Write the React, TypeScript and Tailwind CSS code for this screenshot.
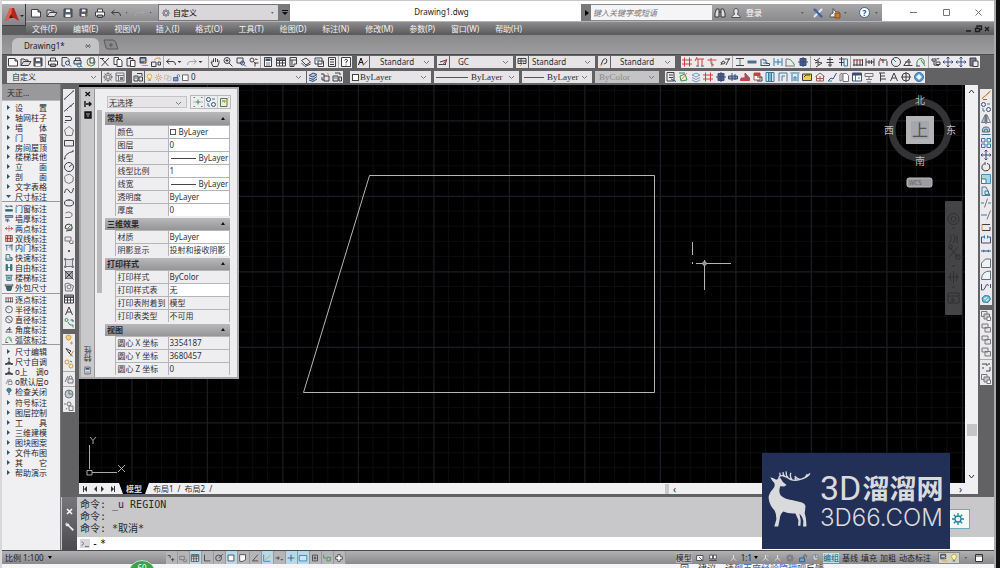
import React, { useState } from 'react';

const K = '#3f3f44';
const S = '#77777c';
const B = '#2f7fa8';
const D = '#3a4f78';
const R = '#c8423c';
const G = '#3f9050';
const O = '#cf9a3a';
const T = '#24606e';
const N = 'none';

// [path, stroke, fill] on a 12 x 12 grid
type Part = [string, string, string?];

const glyphs: Record<string, Part[]> = {
    new: [['M1.5 2.5H8L10.5 5V10H1.5ZM8 2.5V5H10.5', K, '#fff']],
    open: [['M1 9.5V3H4L5 4H8V5.500M1 9.500L3.500 5.500H11L8.500 9.500Z', K, '#dcdcdf']],
    save: [['M2 2H10V10H2Z', K, '#5b6470'], ['M4 2.500H8V5H4ZM3.500 7.500H8.500V10H3.500Z', N, '#fff']],
    saveAs: [['M2 2H9V9H2Z', K, '#5b6470'], ['M4 2.500H7.500V4.500H4ZM3.500 7H7V9H3.500Z', N, '#fff'], ['M6.500 10L10.500 6', O]],
    print: [['M3.500 5V2H8.500V5M1.500 5H10.500V9H1.500ZM3.500 8H8.500V10.500H3.500Z', K, '#fff']],
    preview: [['M2 1.500H7L9 3.500V6M2 1.500V10H5', K], ['M5.500 7a2 2 0 1 0 4 0a2 2 0 1 0 -4 0M9 8.500L11 10.500', D]],
    publish: [['M2 4.500H9V8H2ZM3.500 4.500V2H8V4.500', K, '#dfe3ea'], ['M5 9a2 2 0 1 0 4 0a2 2 0 1 0 -4 0M8.500 10L10.500 11', B]],
    dwf: [['M2 6a4 4 0 1 0 8 0a4 4 0 1 0 -8 0', G], ['M5 2H9V7H5Z', K, '#fff'], ['M3 8L6 10', O]],
    cut: [['M2 2L9.500 10M10 2L2.500 10M1 2.500H5', K]],
    copy: [['M2 1.500H6.500V8.500H2Z', K, '#fff'], ['M5 3.500H8.500L10 5V10.500H5Z', K, '#fff']],
    paste: [['M2 2.500H8V10H2ZM4 1.500H6', K], ['M5.500 4.500H10V10.500H5.500Z', K, '#fff']],
    match: [['M2 1.500H8V7H2Z', K, '#6b7a9a'], ['M4 9.500H10M6 7L9.500 4', O], ['M3 4H7', '#fff']],
    block: [['M1.500 6H6V10.500H1.500ZM8 6H10.500V9H8Z', K], ['M4 4L7 2H10V4', O]],
    undo: [['M4.500 3L1.500 5.500L4.500 8M1.500 5.500H8Q10.500 5.500 10.500 9', K]],
    redo: [['M7.500 3L10.500 5.500L7.500 8M10.500 5.500H4Q1.500 5.500 1.500 9', '#a5a5aa']],
    down: [['M1.500 5H5.500L3.500 7Z', N, K]],
    pan: [['M3 7V4.500M4.500 6V2.500M6.500 6V2M8.500 6V3M2 6L4 10.500H8.500L10 7V4.500', K]],
    zoom: [['M2 4.500a3 3 0 1 0 6 0a3 3 0 1 0 -6 0M7 7L10.500 10.500M5 3V6M3.500 4.500H6.500', K]],
    zoomWin: [['M2 2H8V7H2Z', K], ['M5.500 7a2 2 0 1 0 4 0a2 2 0 1 0 -4 0M9 8.500L11 10.500', D]],
    zoomPrev: [['M2 4a2 2 0 1 0 4 0a2 2 0 1 0 -4 0M5.500 5.500L8 8M10.500 7H7V10.500M7 3L9.500 3.500', K]],
    props: [['M2.500 1.500H9.500V10.500H2.500Z', K, '#fff'], ['M3.500 2.500H8.500V5H3.500Z', N, D], ['M4 7H8M4 9H8', S]],
    grid: [['M1.500 2H10.500V10H1.500Z', K, '#fff'], ['M1.500 4.500H10.500M1.500 7H10.500M4.500 2V10M7.500 2V10', K], ['M2 2.200H10V4H2Z', N, S]],
    palette: [['M3 1.500H9.500V8H7V10.500H3ZM3 4H9.500M5 4V10', K]],
    sheets: [['M1.500 4.500L6 2L10.500 6L6 9ZM1.500 7L5 10.500L10.500 8', K]],
    markup: [['M2 2H9V8H2ZM5 5H10.500V10.500H5Z', K, '#fff'], ['M3 4H7', B]],
    calc: [['M2.500 1.500H9.500V10.500H2.500Z', K], ['M4 3.500H8M4 6H8M4 8.500H8', K]],
    help: [['M1.500 1.500H10.500V10.500H1.500Z', K, '#fff'], ['M4.500 4.500Q6 2 7.500 4Q7.500 5.500 6 6V7.200M6 8.500V9.500', K]],
    textStyle: [['M1.500 9L4 2L6.500 9M2.500 6.500H5.500', '#111'], ['M6 9.500L10.500 4.500', '#8d5a2a']],
    dimStyle: [['M1.500 8.500H9M3 6L9.500 4L8 9', K], ['M5.500 9L10 3', R]],
    tableStyle: [['M2 2.500H10V7.500H2ZM2 5H10M5 2.500V7', K], ['M4 10L8 6', O]],
    leader: [['M3 9L5 4Q8 1 9 4Q9 8 6 8', K], ['M2 10.500L5 7.500', O]],
    hash: [['M3.500 1.500V10.500M8.500 1.500V10.500M1 4H11M1 8H11', R]],
    piR: [['M2 3H10M4 3V10.500M8 3V10.500M1 5L3 1', R], ['M2 10H5M7 10H10', B]],
    flagR: [['M1.500 4H10.500M5 2V7Q5 9 8 9', R], ['M6 6V11', S]],
    axis: [['M2 9Q4 2 6 7M7 9L10.500 2M6 3H11M2 6a2 2 0 1 0 4 0', K]],
    ibeam: [['M2 2.500H10M2 9.500H10', K], ['M6 3V9', G]],
    bar: [['M1.500 4.500H10.500V7.500H1.500Z', N, '#4a6f88']],
    stairs: [['M2 9.500H10.500V7.500H7V4H4V2.500M2 3V10', D], ['M4 7H9', B]],
    span: [['M2 2V10M10 2V10M6 3V9', B], ['M2.500 6H9.500', B]],
    arcG: [['M2 3Q7 2 10.500 9', G], ['M2 3V10M1 10H11', S]],
    column: [['M3 2.500H9V9.500H3ZM1 6H11M6 1V11', D, '#4d5e86']],
    pen1: [['M2 3L4 5L8 2M3 7L6 6L10 7L4 11M6 4V9', K]],
    pen2: [['M3 3.500H9M2.500 6.500H9.500M6 1V11M4 9H8', K]],
    pen3: [['M2 3H7M4.500 1V10M2 6.500H7', K], ['M7 3H10.500V10H7Z', B]],
    dims: [['M2 3V10M5 3V10M8 3V10M10.500 3V10', K], ['M1.500 4H10.500', R], ['M1 9H11', K]],
    dimH: [['M2 2.500V10M10 2.500V10M2 6H10M5 4V8M7.500 4V8', K]],
    dimD: [['M2 5V10M10 5V10M2 4H10M6 3V7', K], ['M3 2L5 4', R]],
    dial: [['M1.500 6a4.500 4.500 0 1 0 9 0a4.500 4.500 0 1 0 -9 0', K], ['M6 6L3 3', B]],
    dialD: [['M1.500 6a4.500 4.500 0 1 0 9 0a4.500 4.500 0 1 0 -9 0', K], ['M9 9L3 3', T]],
    angle: [['M1.500 9.500H10.500M2 9L7 3V9M3 6H9', K]],
    arcDim: [['M2 10Q1 3 6 2.500Q10 3 9 8M6 4L10 10', G], ['M1 10H5', K]],
    nodes: [['M2 3H6V5H2ZM6 6H10V8.500H6Z', K], ['M4 5V9L9 9.500M7 2a1 1 0 1 0 2 0', K]],
    move: [['M6 1V11M1 6H11M4.500 2.500L6 1L7.500 2.500M4.500 9.500L6 11L7.500 9.500M2.500 4.500L1 6L2.500 7.500M9.500 4.500L11 6L9.500 7.500', D]],
    clip: [['M2 2H8V10H2Z', K, '#777a88'], ['M5 5H10V10.500H5Z', K, '#e8e8ee']],
    gear: [['M4 6a2 2 0 1 0 4 0a2 2 0 1 0 -4 0M6 1V3M6 9V11M1 6H3M9 6H11M2.500 2.500L4 4M8 8L9.500 9.500M9.500 2.500L8 4M2.500 9.500L4 8', S], ['M2.500 6a3.500 3.500 0 1 0 7 0a3.500 3.500 0 1 0 -7 0', S]],
    wspace: [['M2 2H10V10H2ZM2 4.500H10M4.500 4.500V10', S], ['M6 6H9V9H6Z', N, S]],
    layers: [['M2 5H6V10H2ZM5 2.500H10V5M7 6H10.500V10H7Z', K], ['M3 7H5', B]],
    bulb: [['M3 4.500a3 3 0 1 1 6 0Q8 6 7.500 8H4.500Q4 6 3 4.500', O, '#fff3b0'], ['M4.500 9.500H7.500', K]],
    bulbT: [['M3 4.500a3 3 0 1 1 6 0Q8 6 6 8Q4 6 3 4.500', T, '#4c8795'], ['M4.500 9.500H7.500', K]],
    sun: [['M4 6a2 2 0 1 0 4 0a2 2 0 1 0 -4 0M6 1V3M6 9V11M1 6H3M9 6H11M2.500 2.500L4 4M8 8L9.500 9.500M9.500 2.500L8 4M2.500 9.500L4 8', O]],
    ghost: [['M2 3H7V8H2ZM6 5H10.500V10H6Z', '#b9b9bd']],
    lock: [['M2 6H8V10.500H2Z', D, '#69a7d8'], ['M7 6V3Q8.500 1 10 3V5', D]],
    square: [['M2 2.500H9.500V10H2Z', K, '#fff']],
    layerA: [['M2 4.500L6 2L10 3.500L6 6ZM2 7L6 8.500L10 5.500M2 9L6 10.500L10 8', D, '#a9c4dc']],
    layerB: [['M2 3H5V5M5 5H10V10H5ZM3 6V9H5', K], ['M8 2L10 3.500', O]],
    layerC: [['M4 2H9V4M2 5H7V10H2ZM8 6H10.500V10H8Z', K], ['M3 7H6', G]],
    sheet: [['M2 1.500H9V10H2ZM4 4H8M4 6.500H8', K], ['M6 8L11 10.500', D]],
    edit: [['M2 2H8M3 5L8 3L10 9L4 10Z', G], ['M4 9L10 2', O]],
    noteY: [['M2.500 2.500H9V10.500H2.500ZM4 5H7', '#557a45', '#e9efdc'], ['M6 7L10.500 1.500', O]],
    addG: [['M1.500 1.500H3M9 1.500H10.500M1.500 10.500H3M9 10.500H10.500M1.500 6H2.500M9.500 6H10.500', S], ['M6 3.500V8.500M3.500 6H8.500', G]],
    stack: [['M2 4L6 2L10 4L6 6ZM2 6.500L6 8.500L10 6.500M2 9L6 11L10 9', '#7a9ac0']],
    wallBeam: [['M1.500 5H10.500V8H1.500ZM5 2V10M8 3V9', D, '#8196b2']],
    roof: [['M1.500 9.500H10.500V7L6 2V7L2 7Z', R, '#8a5a78']],
    door: [['M2 2H8V9H2Z', R, '#fff'], ['M2 2H8V5H2Z', N, R], ['M5 6H10V10H5', K]],
    panel: [['M2 1.500H10V10.500H2ZM4.500 2V10M7.500 2V10M6 2V10', B, '#d3e8f2']],
    gate: [['M2 10.500V2H10V10.500M5 10V5H8', '#4a7896']],
    gateB: [['M1.500 2H10.500M3 10.500V3M9 10.500V3M5 10V6H7V10', B, '#bfe2f2']],
    mail: [['M1.500 3H10.500V9.500H1.500Z', K, '#f0cf3c'], ['M3 6L5 4H9', K]],
    house: [['M1.500 5.500L6 2L10.500 5.500M2.500 5V10H9.500V5M2.500 7.500H9.500M6 5V10', '#a05a54']],
    chart: [['M2 10L5 7L7 8L10.500 2', D], ['M2 10H6', B]],
    book: [['M2 3.500L4 2V9L2 10ZM5 2.500H8.500L10.500 4.500V10.500H5Z', S, '#fff']],
    table: [['M1.500 2H10.500V10H1.500Z', D, '#fff'], ['M1.500 2H10.500V4.500H1.500Z', N, D], ['M4.500 4V10M7 7H9', B]],
    tree: [['M2 2.500H10V5.500H2ZM6 5.500V8M3 8.500H9M4 11H8', S]],
    bars: [['M3 2H9M4.500 2V10.500M4.500 5H9M4.500 8H10', K]],
    letterA: [['M2.500 10L6 2L9.500 10M4 7H8', K]],
    cross: [['M2 6a4 4 0 1 0 8 0a4 4 0 1 0 -8 0M6 1V11M1 6H11', K]],
    globe: [['M1.500 6a4.500 4.500 0 1 0 9 0a4.500 4.500 0 1 0 -9 0', '#3f76ab', '#5b9bcf'], ['M3 6L6 3L9 6L6 9Z', N, '#e9f5fc']],
    doorDim: [['M1 3H11M2 1.500L4 4.500M8 1.500L10 4.500', D], ['M1 7H11V10H1Z', N, T]],
    wallDim: [['M1 2H11V4.500H1ZM1 7H6', D, '#9aabc0'], ['M4 7V11M1 9H7', D]],
    twoPt: [['M1 6H11M3.500 4L1 6L3.500 8M8.500 4L11 6L8.500 8', R], ['M6 2V10', S]],
    dblLine: [['M1.500 2H10.500V10H1.500ZM4 2V10M8 2V10M1.500 6H10.500', '#8a3430', '#e4b9b5']],
    innerDoor: [['M1 3H11M3 3V10M6 6L10 2V10', T, '#a5d0d6']],
    quick: [['M2 2H7V6H10V10H2ZM1 8H11', T, '#dbe9ec']],
    free: [['M2 2H4V10H2ZM8 2H10V10H8ZM4 6H8', T, '#4a8d86']],
    stairDim: [['M1 3H11M3 3V10H9V3M5 5V8M7 5V8', T, '#b2d0d8']],
    outer: [['M2 4H10L8.500 10H3.500ZM1 1.500V4.500M11 1.500V4.500M1 2.500H11', K, '#39666c']],
    dotTri: [['M6 2V6L2 9.500H10L6 6', K, K], ['M1 8H3V10.500H1ZM9 8H11V10.500H9ZM5 1H7V3H5Z', N, K]],
    line: [['M1.500 10L10.500 2', K], ['M1 10H2.500M9.500 2H11', D]],
    ray: [['M1 10.500L11 2', K], ['M3 8L4.500 9.500M7 4.500L8.500 6', D]],
    polyline: [['M2 3.500H7Q10 4.500 8 7.500H2', K], ['M1.500 9.500H3.500', B]],
    polygon: [['M6 1.500L10.500 5L9 10.500H3L1.500 5Z', S]],
    rect: [['M1.500 3.500H10.500V9H1.500Z', K]],
    arc: [['M1.500 10.500Q2 4 10 2.500', K], ['M1 9.500H2.500M9 2H11', D]],
    circle: [['M1.500 6a4.500 4.500 0 1 0 9 0a4.500 4.500 0 1 0 -9 0', K], ['M6 6L9 3.500', D]],
    cloud: [['M4 2Q7 0 8.500 2.500Q11.500 4 10 6Q11 9 8 9.500Q5.500 11.500 4 9.500Q1 9 2 6.500Q0.500 3 4 2', S]],
    spline: [['M1.500 8Q3 1 6 6Q9 11 10.500 3', K]],
    ellipse: [['M1.500 6a4.500 3 0 1 0 9 0a4.500 3 0 1 0 -9 0', K], ['M6 2V4M1 6H2', D]],
    ellipseArc: [['M2 8.500H7Q10 7 9 4.500Q6 1.500 2.500 4', S]],
    insert: [['M2 7Q2 3 6 3L9 5V8H4ZM3 10L9 9', K], ['M5 7L9 3', G]],
    makeBlock: [['M2 4H8V8H2ZM6 8L7 10.500H10V7.500', S]],
    point: [['M5.500 5.500H6.500V6.500H5.500Z', K, K]],
    hatch: [['M2.500 2.500H9.500V9.500H2.500Z', S, '#dcdce0'], ['M1.500 1.500H3V3H1.500ZM9 1.500H10.500V3H9ZM1.500 9H3V10.500H1.500ZM9 9H10.500V10.500H9Z', S]],
    gradient: [['M2.500 2.500H9.500V9.500H2.500Z', S, '#a9a9b0'], ['M1.500 1.500L10.500 10.500M10 2L2 10', K]],
    region: [['M2 3L5 2L10.500 5L9 10H2.500Z', S], ['M4 6a2 2 0 1 0 4 0a2 2 0 1 0 -4 0', S]],
    dots: [['M2 3a1.500 1.500 0 1 0 3 0a1.500 1.500 0 1 0 -3 0M5 5L7 8H10V10.500', G], ['M7.500 3H10V5', D]],
    brushO: [['M3 3.500a2.500 2.500 0 1 1 5 0L6.500 6H4.500Z', O, '#f6cf80'], ['M7 9H10M8.500 7.500V10.500', O]],
    brushR: [['M3 2.500L8 5L6 7ZM6 7L9.500 10', K], ['M7 10.500L10.500 5', O]],
    sunPair: [['M2 4a2 2 0 1 0 4 0a2 2 0 1 0 -4 0M6 8a2 2 0 1 0 4 0a2 2 0 1 0 -4 0', O], ['M7 3L9 4', B]],
    lockS: [['M5 6H10V10H5ZM6 6V4Q7.500 2 9 4V6M2 9L5 3', S]],
    ball: [['M2 6a4 4 0 1 0 8 0a4 4 0 1 0 -8 0', S, '#b9cbd6'], ['M6 2V6H9.500', S]],
    sunDoc: [['M4 4a2 2 0 1 0 4 0a2 2 0 1 0 -4 0M6 6H10V10.500H6ZM1 4H3M4 8L3 9.500', S]],
    erase: [['M2 9.500L5 7L10.500 2M3 10.500H7', '#a4623a'], ['M4.500 7.500L10 3', O]],
    copyObj: [['M1.500 3.500a2 2 0 1 0 4 0a2 2 0 1 0 -4 0M6.500 8.500a2 2 0 1 0 4 0a2 2 0 1 0 -4 0', D], ['M7 3H10M3 7V10H5', B]],
    mirror: [['M5 2V9.500H1.500Z', '#6d7d90', '#b6c2ce'], ['M7 2V9.500H10.500Z', '#6d7d90'], ['M6 1V11', K]],
    offset: [['M1.500 9.500H10.500M2.500 7Q1.500 2 6 2Q10.500 2 9.500 7ZM4 7Q4 4 6 4Q8 4 8 7', '#4a6f88', '#b9ced9']],
    array: [['M1.500 1.500H5V5H1.500ZM7 1.500H10.500V5H7ZM1.500 7H5V10.500H1.500ZM7 7H10.500V10.500H7Z', B]],
    rotate: [['M4 2.500Q1 4.500 2 8Q4.500 11 8 9.500Q11 7.500 9.500 4Q8.500 2.500 7 2.500M5 1V4', K]],
    scale: [['M1.500 1.500H10.500V10.500H1.500Z', '#4a90b0', '#a9d5e8'], ['M1.500 6H6V10.500H1.500Z', B, '#fff']],
    stretch: [['M2 2H6L10 10.500H2Z', '#5a7d92', '#dbe8ef'], ['M5 6H8.500V9.500H5Z', B]],
    trim: [['M1 6H4M8 6H11', B], ['M7.500 1.500L4.500 10.500', S]],
    extend: [['M1 6H7', B], ['M10.500 1.500L7 10.500', S]],
    breakPt: [['M2 3.500H10M2 9.500H10V6', K], ['M2 3.500V9.500', O]],
    breakTwo: [['M1.500 10V4H4.500M7.500 4H10.500V10H1.500', D], ['M4.500 2.500V5.500M7.500 2.500V5.500', B]],
    join: [['M1 6H11', D], ['M3 4.500L5.500 6L3 7.500ZM9 4.500L6.500 6L9 7.500Z', N, B]],
    chamfer: [['M1.500 10.500V6L5.500 2H10.500V10.500Z', '#5b6f7d', '#eef3f5']],
    fillet: [['M1.500 10.500Q1.500 2 10.500 2V10.500Z', '#5b6f7d', '#eef3f5']],
    blend: [['M1.500 3V9Q4 10 5.500 6Q7 1 8.500 5M10.500 3V7', D]],
    explode: [['M2 5L5 2.500L9 3L10.500 6L8 9.500L3 9Z', B, '#74bcd8'], ['M4 6L7 4.500M6 8L8.500 6', '#fff']],
    orderA: [['M1.500 1.500H7V6.500H1.500Z', S], ['M4 4H9.500V9H4Z', S, '#c7c7cc'], ['M7 7H10.500V10.500H7Z', S, '#fff']],
    orderB: [['M2 2H8V6H2ZM5 5.500H10.500V10H5Z', S, '#e5e5e8']],
    bring: [['M2 3H7V5M10 6V10H6', K], ['M2 7H4M9 2V4', K]],
    snap: [['M2 3H5V6M6 8H10M8 6V10', K]],
    ortho: [['M3 2V9.500H10', K]],
    polar: [['M2 6a3.500 3.500 0 1 0 7 0a3.500 3.500 0 1 0 -7 0M5.500 6L10.500 1.500', K]],
    osnap: [['M2.500 2.500H9.500V9.500H2.500Z', K, '#fff']],
    osnap3: [['M2 2H9V8L6 10H2Z', K, '#fff']],
    otrack: [['M9.500 2L3 9.500H10', K]],
    ducs: [['M2 2V10H10', B], ['M4 8L10 3', O]],
    dyn: [['M2 6H7M5 4V8M8 8H11', K]],
    plus: [['M6 2V10M2 6H10', D]],
    lwt: [['M1.500 3H10.500V9.500H1.500Z', B, '#cfe6f2']],
    tpy: [['M3 2.500H9V9.500H3ZM5 5H7V7H5Z', K]],
    qp: [['M2 2V6H5M6 5H10V9.500H6Z', G]],
    sc: [['M4.500 2H7.500V4.500H10V7.500H7.500V10H4.500V7.500H2V4.500H4.500Z', K, '#fff']],
    layoutA: [['M2 3H9.500V9H2ZM5 5L9 9', K, '#fff']],
    layoutB: [['M2 2.500H5.500V7H2ZM6.500 2.500H10V7H6.500ZM1.500 9H10.500', K, '#fff']],
    anno: [['M6 2V6L2.500 9.500M6 6L9.500 9.500', '#f4f4f6']],
    annoY: [['M6 2V6L2.500 9.500M6 6L9.500 9.500', '#f4f4f6'], ['M8 2L10 4', '#e8cf4a']],
};

const Glyph: React.FC<{ name: string; className?: string }> = ({ name, className = 'w-3 h-3' }) => (
    <svg viewBox="0 0 12 12" fill="none" strokeWidth={1} className={`shrink-0 ${className}`} aria-hidden="true">
        {glyphs[name].map(([d, stroke, fill], i) => (
            <path key={i} d={d} stroke={stroke} fill={fill || 'none'} />
        ))}
    </svg>
);

const Tool: React.FC<{ name: string; className?: string }> = ({ name, className = '' }) => (
    <button type="button" aria-label={name} className={`flex items-center justify-center shrink-0 ${className}`}>
        <Glyph name={name} />
    </button>
);

// '|' is a separator between groups of buttons
const Strip: React.FC<{ items: string; vertical?: boolean; label: string }> = ({ items, vertical, label }) => (
    <div
        role="toolbar"
        aria-label={label}
        className={`flex shrink-0 bg-[#eceaed] ${vertical ? 'flex-col items-center w-3' : 'items-center justify-between h-3'}`}
    >
        {items.split(' ').map((item, i) =>
            item === '|' ? (
                <span key={i} className={vertical ? 'h-px w-3 my-px bg-[#a9a8ab]' : 'w-px h-3 bg-[#a9a8ab]'} />
            ) : (
                <Tool key={i} name={item} className={item === 'down' ? 'w-2 overflow-hidden' : ''} />
            )
        )}
    </div>
);

const Chevron = () => (
    <svg viewBox="0 0 7 5" className="w-[7px] h-[5px] shrink-0 self-center justify-self-end mr-1 col-start-1 row-start-1 pointer-events-none" fill="none" stroke="#77777c">
        <path d="M1 1L3.500 3.500L6 1" />
    </svg>
);

interface ComboProps {
    label: string;
    value: string;
    className?: string;
    selectClass?: string;
    disabled?: boolean;
    children?: React.ReactNode;
}

const Combo: React.FC<ComboProps> = ({ label, value, className = 'bg-[#e6e4e7]', selectClass = '', disabled, children }) => (
    <div className={`grid items-center shrink-0 h-3 ${className}`}>
        <select
            aria-label={label}
            disabled={disabled}
            defaultValue={value}
            className={`appearance-none bg-transparent col-start-1 row-start-1 w-full h-3 leading-3 outline-none ${selectClass}`}
        >
            <option>{value}</option>
        </select>
        {children}
        <Chevron />
    </div>
);

const LineSample: React.FC<{ className: string }> = ({ className }) => (
    <span className={`col-start-1 row-start-1 h-px bg-[#55555a] pointer-events-none ${className}`} />
);

const menus = ['文件(F)', '编辑(E)', '视图(V)', '插入(I)', '格式(O)', '工具(T)', '绘图(D)', '标注(N)', '修改(M)', '参数(P)', '窗口(W)', '帮助(H)'];

const Header = () => (
    <header className="shrink-0 bg-white">
        <div className="h-1 border-t border-[#c9c8c6]" />
        <div className="flex">
            <div className="w-6 shrink-0 bg-[#5d5c5f]">
                <button type="button" aria-label="应用程序菜单" className="w-6 h-[22px] flex items-center justify-center bg-linear-to-b from-[#b0afb2] to-[#858488] border-r border-b border-[#3e3e42]">
                    <svg viewBox="0 0 22 20" className="w-[22px] h-5">
                        <path d="M2 16L7 3H11L16 16L11 13L8 13Z" fill="#b5251c" />
                        <path d="M7 3H9L8 13L2 16Z" fill="#e2604d" />
                        <path d="M8 9L10 13H6Z" fill="#6d110e" />
                        <path d="M17 10H21L19 12Z" fill="#222" />
                    </svg>
                </button>
            </div>
            <div className="flex-1 min-w-0">
                <div className="flex h-[17px]">
                    <div className="flex items-center justify-between w-[132px] px-1 shrink-0 bg-linear-to-b from-[#adacaf] to-[#8d8c8f]">
                        {['new', 'open', 'save', 'saveAs', 'print', 'undo', 'down', 'redo', 'down'].map((name, i) => (
                            <Tool key={i} name={name} className={name === 'down' ? 'w-1 overflow-hidden' : ''} />
                        ))}
                    </div>
                    <div className="flex items-center w-[121px] h-[17px] shrink-0 bg-[#d9d7da] border border-[#77767a]">
                        <Glyph name="gear" className="w-[10px] h-[10px] ml-0.5" />
                        <select aria-label="工作空间" className="appearance-none flex-1 bg-transparent px-0.5 outline-none text-black">
                            <option>自定义</option>
                        </select>
                        <Glyph name="down" className="w-2 h-2" />
                    </div>
                    <button type="button" aria-label="自定义快速访问工具栏" className="w-[11px] shrink-0 flex items-center justify-center bg-[#79787b]">
                        <svg viewBox="0 0 6 6" className="w-[6px] h-[6px]"><path d="M0 0H6V1H0ZM0 2H6L3 5Z" fill="#111" /></svg>
                    </button>
                    <h1 className="flex-1 text-center pl-3 leading-[15px] text-[8px] text-[#222]">Drawing1.dwg</h1>
                    <div className="w-[10px] shrink-0 bg-[#79787b] flex items-center justify-center">
                        <svg viewBox="0 0 5 6" className="w-[5px] h-[6px]"><path d="M1 0L5 3L1 6Z" fill="#000" /></svg>
                    </div>
                    <input aria-label="搜索" placeholder="键入关键字或短语" className="w-[121px] shrink-0 px-0.5 italic bg-[#f5f4f6] border-y border-[#8a898c] outline-none placeholder:text-[#77767a]" />
                    <div className="flex items-center w-[170px] shrink-0 pl-0.5 bg-linear-to-b from-[#a8a7aa] to-[#8a898c] text-white">
                        <svg viewBox="0 0 12 12" className="w-3 h-3 shrink-0" fill="#dcdcdf" stroke="#3a3a3e"><path d="M1 10V6L2.500 2H5V10ZM7 10V2H9.500L11 6V10ZM5 5H7" /></svg>
                        <a href="#login" className="flex shrink-0 items-center gap-1 ml-1 whitespace-nowrap">
                            <svg viewBox="0 0 12 12" className="w-3 h-3 shrink-0" fill="#e6e6e8" stroke="#55555a"><path d="M1.500 10.500Q2 8 4.500 7.500Q2.500 1.500 6 1.500Q9.500 1.500 7.500 7.500Q10 8 10.500 10.500Z" /></svg>
                            登录
                        </a>
                        <Glyph name="down" className="w-2 h-2 ml-[38px]" />
                        <svg viewBox="0 0 12 12" className="w-3 h-3 shrink-0 ml-1" fill="none" strokeWidth="2"><path d="M2 2L10 10" stroke="#2a4f8f" /><path d="M10 2L2 10" stroke="#dfe8f6" /><path d="M1 2H4L11 10H8Z" fill="#3f67aa" /></svg>
                        <svg viewBox="0 0 14 12" className="w-[14px] h-3 shrink-0 ml-1" stroke="#55555a"><path d="M5 1.500L8 5H11V10H2Q1 7 5 6Z" fill="#eee" /><path d="M7 6H12V11H7Z" fill="#cc7a2e" stroke="#8a4d16" /></svg>
                        <Glyph name="down" className="w-2 h-2 ml-px" />
                        <button type="button" aria-label="帮助" className="ml-2 shrink-0 w-[11px] h-[11px] rounded-full border border-[#3f5f9a] bg-white text-[#2a4a90] font-bold leading-[9px]">?</button>
                        <Glyph name="down" className="w-2 h-2 ml-1" />
                    </div>
                    <div className="flex items-center justify-between w-[112px] shrink-0 px-7 text-[#77777a]">
                        <button type="button" aria-label="最小化"><svg viewBox="0 0 7 7" className="w-[7px] h-[7px]" stroke="currentColor"><path d="M0 3.500H7" /></svg></button>
                        <button type="button" aria-label="最大化"><svg viewBox="0 0 7 7" className="w-[7px] h-[7px]" fill="none" stroke="currentColor"><path d="M.5 .5H6.500V6.500H.5Z" /></svg></button>
                        <button type="button" aria-label="关闭" className="-mr-4"><svg viewBox="0 0 7 7" className="w-[7px] h-[7px]" stroke="currentColor"><path d="M.5 .5L6.500 6.500M6.500 .5L.5 6.500" /></svg></button>
                    </div>
                </div>
                <nav className="flex items-center h-[14px] pl-[6px] pr-1 gap-4 bg-linear-to-b from-[#8c8b8e] to-[#59585b] text-[#f2f2f3] border-t border-[#b3b2b5]">
                    {menus.map(menu => (
                        <a key={menu} href="#menu" className="whitespace-nowrap">{menu}</a>
                    ))}
                    <svg viewBox="0 0 24 8" className="w-6 h-2 ml-auto" fill="none" stroke="#1c1c1e"><path d="M0 6H5M9.500 3.500H13.500V6.500H9.500ZM11 3V1H15.500V4.500H14M19 2L23 6M23 2L19 6" strokeWidth="1.300" /></svg>
                </nav>
            </div>
        </div>
        <div className="flex items-end h-[19px] pl-[10px] bg-linear-to-b from-[#8b8a8d] to-[#9d9c9f]">
            <button type="button" className="flex items-center h-4 gap-5 pl-3 pr-2 rounded-t-md bg-[#c3c2c5] text-[#222]">
                <span className="text-[8px]">Drawing1*</span>
                <svg viewBox="0 0 6 6" className="w-[6px] h-[6px]" stroke="#77767a"><path d="M1 1L5 5M5 1L1 5M0 3H6" /></svg>
            </button>
            <button type="button" aria-label="新图形" className="ml-1 mb-1">
                <svg viewBox="0 0 16 11" className="w-4 h-[11px]" fill="#8a898c" stroke="#5a595c"><path d="M1 1H10Q12 1 13 4L15 10H5Q3 10 2.500 7ZM8 4V8M6 6H10" /></svg>
            </button>
        </div>
    </header>
);

const Toolbars = () => (
    <div className="shrink-0 flex flex-col gap-[3px] py-px pl-[5px] bg-[#626164] text-[#2d2d31] border-t border-[#4c4b4e]">
        <div className="flex items-center h-3">
            <div className="w-[345px] shrink-0">
                <Strip label="标准" items="new open save | print preview publish dwf | cut copy paste match block | undo down redo down | pan zoom zoomWin zoomPrev | props grid palette sheets markup calc | help" />
            </div>
            <div className="flex ml-[5px] gap-px text-[8px]">
                <Tool name="textStyle" className="bg-[#e6e4e7]" />
                <Combo label="文字样式" value="Standard" className="w-16 bg-[#e6e4e7]" selectClass="pl-[10px]" />
                <Tool name="dimStyle" className="bg-[#e6e4e7] ml-0.5" />
                <Combo label="标注样式" value="GC" className="w-[63px] bg-[#e6e4e7]" selectClass="pl-2" />
                <Tool name="tableStyle" className="bg-[#e6e4e7] ml-0.5" />
                <Combo label="表格样式" value="Standard" className="w-[66px] bg-[#e6e4e7]" selectClass="pl-[3px]" />
                <Tool name="leader" className="bg-[#e6e4e7] ml-0.5" />
                <Combo label="多重引线样式" value="Standard" className="w-16 bg-[#e6e4e7]" selectClass="pl-[9px]" />
            </div>
            <div className="w-[299px] ml-[6px] shrink-0">
                <Strip label="天正快捷" items="hash piR flagR axis | ibeam bar stairs span arcG column | pen1 pen2 pen3 | dims dimH dimD dial angle arcDim | nodes move move clip" />
            </div>
        </div>
        <div className="flex items-center h-3">
            <Combo label="工作空间列表" value="自定义" className="w-[94px] bg-[#e6e4e7]" selectClass="pl-[5px]" />
            <Tool name="gear" className="bg-[#e6e4e7] ml-px" />
            <Tool name="wspace" className="bg-[#e6e4e7]" />
            <Tool name="layers" className="bg-[#e6e4e7] ml-[6px]" />
            <Combo label="图层" value="0" className="w-[161px] ml-px bg-[#e6e4e7]" selectClass="pl-[46px]">
                <span className="flex items-center col-start-1 row-start-1 pointer-events-none">
                    {['bulb', 'sun', 'ghost', 'lock', 'square'].map(name => <Glyph key={name} name={name} className="w-[9px] h-[9px]" />)}
                </span>
            </Combo>
            <Tool name="layerA" className="bg-[#e6e4e7] ml-px" />
            <Tool name="layerB" className="bg-[#e6e4e7]" />
            <Tool name="layerC" className="bg-[#e6e4e7]" />
            <div className="flex gap-[3px] ml-[7px] font-['Liberation_Serif',serif] text-[9px]">
                <Combo label="颜色控制" value="ByLayer" className="w-[81px] bg-[#e6e4e7]" selectClass="pl-[10px]">
                    <span className="col-start-1 row-start-1 ml-0.5 w-[7px] h-[7px] bg-white border border-[#444448] pointer-events-none" />
                </Combo>
                <Combo label="线型控制" value="ByLayer" className="w-[85px] bg-[#e6e4e7]" selectClass="pl-[37px]"><LineSample className="ml-0.5 w-8" /></Combo>
                <Combo label="线宽控制" value="ByLayer" className="w-[70px] bg-[#e6e4e7]" selectClass="pl-[25px]"><LineSample className="ml-0.5 w-5" /></Combo>
                <Combo label="打印样式控制" value="ByColor" disabled className="w-16 bg-[#c4c3c6]" selectClass="pl-1 text-[#8a898c]" />
            </div>
            <div className="w-[260px] ml-[6px] shrink-0">
                <Strip label="天正工具" items="sheet edit stack hash column wallBeam roof door panel gate gateB mail house chart book table tree bars letterA cross globe" />
            </div>
        </div>
    </div>
);

interface Group {
    className: string;
    items: [string, string][];
}

const groups: Group[] = [
    { className: 'h-[98px]', items: ['设　　置', '轴网柱子', '墙　　体', '门　　窗', '房间屋顶', '楼梯其他', '立　　面', '剖　　面', '文字表格', '尺寸标注'].map(t => [t === '尺寸标注' ? 'opened' : 'closed', t]) },
    { className: 'h-[91px] pt-0.5 border-t', items: [['doorDim', '门窗标注'], ['wallDim', '墙厚标注'], ['twoPt', '两点标注'], ['dblLine', '双线标注'], ['innerDoor', '内门标注'], ['quick', '快速标注'], ['free', '自由标注'], ['stairDim', '楼梯标注'], ['outer', '外包尺寸']] },
    { className: 'h-[51px] mt-px border-t', items: [['dims', '逐点标注'], ['dial', '半径标注'], ['dialD', '直径标注'], ['angle', '角度标注'], ['arcDim', '弧弦标注']] },
    { className: 'h-[52px] pt-0.5 border-t', items: [['closed', '尺寸编辑'], ['dotTri', '尺寸自调'], ['dotTri', 'o上　调o'], ['lockS', 'o默认层o'], ['bulbT', '检查关闭']] },
    { className: 'h-[79px] mt-[2px]', items: ['符号标注', '图层控制', '工　　具', '三维建模', '图块图案', '文件布图', '其　　它', '帮助演示'].map(t => ['closed', t]) },
];

const Screen = () => (
    <aside className="w-[59px] shrink-0 bg-[#f0eff2] border-r border-[#77767a] text-[#26262a]">
        <h2 className="h-[17px] pl-[5px] leading-[17px] bg-[#99989b] text-[8px] font-normal border-b border-[#bbb]">天正...</h2>
        <div className="pt-0.5">
            {groups.map((group, g) => (
                <ul key={g} className={`grid auto-rows-fr border-[#99989b] ${group.className}`}>
                    {group.items.map(([icon, text]) => (
                        <li key={text} className="min-h-0 flex items-center">
                            <button type="button" className="flex items-center whitespace-nowrap leading-[9px]">
                                <span className="w-[13px] flex justify-center">
                                    {icon === 'closed' || icon === 'opened' ? (
                                        <svg viewBox="0 0 5 5" className="w-[5px] h-[5px]" fill="#28566b"><path d={icon === 'opened' ? 'M0 1H5L2.500 4Z' : 'M1 0L4 2.500L1 5Z'} /></svg>
                                    ) : (
                                        <Glyph name={icon} className="w-[10px] h-[9px]" />
                                    )}
                                </span>
                                {text}
                            </button>
                        </li>
                    ))}
                </ul>
            ))}
        </div>
    </aside>
);

const sections: { title: string; rows: [string, string][] }[] = [
    { title: '常规', rows: [['颜色', 'ByLayer'], ['图层', '0'], ['线型', 'ByLayer'], ['线型比例', '1'], ['线宽', 'ByLayer'], ['透明度', 'ByLayer'], ['厚度', '0']] },
    { title: '三维效果', rows: [['材质', 'ByLayer'], ['阴影显示', '投射和接收阴影']] },
    { title: '打印样式', rows: [['打印样式', 'ByColor'], ['打印样式表', '无'], ['打印表附着到', '模型'], ['打印表类型', '不可用']] },
    { title: '视图', rows: [['圆心 X 坐标', '3354187'], ['圆心 Y 坐标', '3680457'], ['圆心 Z 坐标', '0']] },
];

const readOnly = ['打印样式', '打印表附着到', '打印表类型', '圆心 X 坐标', '圆心 Y 坐标', '圆心 Z 坐标'];

const Properties = () => {
    const [closed, setClosed] = useState<string[]>([]);
    const toggle = (title: string) =>
        setClosed(closed.includes(title) ? closed.filter(t => t !== title) : [...closed, title]);

    return (
        <section className="absolute left-0 top-0.5 w-40 h-[292px] flex bg-[#eeedf0] border-2 border-[#a9a8ab] text-[#333336] overflow-hidden">
            <div className="w-[14px] shrink-0 flex flex-col items-center bg-[#c9c8cb] border-r border-[#99989b] py-0.5">
                <svg viewBox="0 0 8 28" className="w-2 h-7" fill="none" stroke="#111" strokeWidth="1.400">
                    <path d="M1.500 1L6 5M6 1L1.500 5M1 10V16M2 13H6M5 11L7 13L5 15" />
                    <path d="M1 21H7V27H1Z" fill="#222" />
                    <path d="M2 23H6M3 25H5" stroke="#ddd" strokeWidth=".7" />
                </svg>
                <span className="mt-auto mb-1 [writing-mode:vertical-rl] rotate-180">特性</span>
                <Glyph name="props" className="w-[9px] h-[9px]" />
            </div>
            <div className="w-[9px] shrink-0 flex justify-center pt-[21px]">
                <div className="w-[5px] h-[183px] bg-[#b9b8bb]" />
            </div>
            <div className="w-[125px] ml-px pt-[6px]">
                <div className="flex items-center gap-[3px] pl-0.5 mb-[3px]">
                    <Combo label="选择" value="无选择" className="w-20 bg-[#e6e4e7] border border-[#c3c2c5]" selectClass="pl-px" />
                    <div className="flex border border-[#b9b8bb]">
                        {['addG', 'copyObj', 'noteY'].map(name => (
                            <Tool key={name} name={name} className="w-[13px] border-l border-[#c9c8cb] first:border-l-0" />
                        ))}
                    </div>
                </div>
                <table className="w-full table-fixed border-collapse">
                    <colgroup>
                        <col className="w-[10px]" />
                        <col className="w-[53px]" />
                        <col />
                    </colgroup>
                    {sections.map(({ title, rows }) => (
                        <tbody key={title} className="border-b-2 border-[#eeedf0]">
                            <tr className="h-[13px]">
                                <th colSpan={3} className="p-0 text-left bg-linear-to-b from-[#b9b8bb] to-[#959497]">
                                    <button type="button" onClick={() => toggle(title)} className="w-full h-3 flex items-center justify-between pl-0.5 pr-[5px] font-bold text-[#29292c]">
                                        {title}
                                        <svg viewBox="0 0 4 3" className="w-1 h-[3px]"><path d="M0 3H4L2 0Z" fill="#111" /></svg>
                                    </button>
                                </th>
                            </tr>
                            {!closed.includes(title) && rows.map(([name, value]) => (
                                <tr key={name} className="h-[13px]">
                                    <td className="p-0" />
                                    <th className="p-0 pl-0.5 text-left font-normal border border-[#b5b4b7] leading-3 whitespace-nowrap">{name}</th>
                                    <td className={`p-0 pl-px border border-[#b5b4b7] leading-3 whitespace-nowrap overflow-hidden ${readOnly.includes(name) ? '' : 'bg-white'}`}>
                                        {name === '颜色' && <span className="inline-block w-[6px] h-[6px] mr-[3px] border border-[#55555a]" />}
                                        {(name === '线型' || name === '线宽') && <span className="inline-block w-[25px] h-px ml-px mr-[3px] align-middle bg-[#44444a]" />}
                                        {value}
                                    </td>
                                </tr>
                            ))}
                        </tbody>
                    ))}
                </table>
            </div>
        </section>
    );
};

const ViewCube = () => (
    <svg viewBox="0 0 80 110" className="absolute right-[5px] top-[5px] w-20 h-[110px] font-['Noto_Sans_CJK_SC',sans-serif]">
        <circle cx="40" cy="40" r="28" fill="none" stroke="#333336" strokeWidth="7" />
        <rect x="26" y="26" width="28" height="28" fill="#b3b3b5" />
        <rect x="31" y="31" width="18" height="18" fill="#a6a7aa" />
        <g fontSize="10" fill="#bcbcbe" textAnchor="middle">
            <text x="40" y="14">北</text>
            <text x="40" y="75">南</text>
            <text x="9" y="44">西</text>
            <text x="71" y="44">东</text>
            <text x="40" y="46" fontSize="16" fill="#515156">上</text>
        </g>
        <rect x="27" y="88" width="25" height="9" rx="2" fill="#9c9b9f" stroke="#bdbcc0" />
        <text x="29" y="95" fontSize="6" fill="#5c5b60">WCS</text>
    </svg>
);

const Drawing = () => (
    <div className="relative flex-1 min-h-0 overflow-hidden bg-black">
        <svg className="w-full h-full" fill="none" aria-label="模型空间">
            <defs>
                <pattern id="minor" x="52" y="35" width="15.1" height="15.1" patternUnits="userSpaceOnUse">
                    <path d="M.5 0V15.100M0 .5H15.100" stroke="#0c0d0f" />
                </pattern>
                <pattern id="major" x="52.5" y="35.500" width="75.500" height="75.500" patternUnits="userSpaceOnUse">
                    <path d="M.5 0V75.500M0 .5H75.500" stroke="#1c1d22" />
                </pattern>
            </defs>
            <rect width="100%" height="100%" fill="url(#minor)" />
            <rect width="100%" height="100%" fill="url(#major)" />
            <path d="M290.500 90.500H575.500V307.500H224.500Z" stroke="#b5b5b1" />
            <path d="M613.500 157V170M613.500 177V179M617 178.500H652M625.500 175V205" stroke="#b5b5b1" />
            <circle cx="625.500" cy="178.500" r="1.800" fill="#88888a" stroke="#b5b5b1" />
            <g stroke="#a9a9a9">
                <path d="M10.500 360V384M13 387.500H38M8 385.500H13V390H8Z" />
                <path d="M11 352L14 355.500L17 352M14 355.500V359M39 380L46 387M46 380L39 387" />
            </g>
        </svg>
        <Properties />
        <ViewCube />
        <svg viewBox="0 0 17 114" className="absolute right-[3px] top-[116px] w-[17px] h-[114px]" fill="none" stroke="#2f2f31">
            <rect width="17" height="114" rx="1" fill="#444446" stroke="none" />
            <circle cx="8.500" cy="18" r="5.500" />
            <circle cx="8.500" cy="18" r="2.500" />
            <path d="M7 27H10M5 33Q8 38 4 42M8 33Q12 38 8 42M12 34V42M4 46L13 56M13 46L4 56M4 44H7V48H4ZM11 54H15V58H11ZM7 65H10M8.500 70V82M3 76H14M6 72Q3 76 6 80M11 72Q14 76 11 80M7 86H10M3 92H14V102H3ZM3 95H14M7 97V101L10 99Z" />
        </svg>
    </div>
);

const tabs = ['模型', '布局1', '布局2'];

const LayoutTabs = () => {
    const [active, setActive] = useState('模型');

    return (
        <div className="flex items-center h-[11px] shrink-0 bg-[#f0eff2] text-[#2c2c30]">
            <svg viewBox="0 0 40 10" className="w-10 h-[10px] shrink-0" fill="#333">
                <path d="M4 2H5V8H4ZM8 2V8L5 5ZM18 2V8L15 5ZM22 2V8L25 5ZM32 2V8L35 5ZM35 2H36V8H35Z" />
            </svg>
            {tabs.map(tab => (
                <button
                    key={tab}
                    type="button"
                    onClick={() => setActive(tab)}
                    className={`h-[11px] leading-[10px] ${active === tab ? 'px-[7px] bg-black text-[#d5d5d5] font-bold [clip-path:polygon(0_0,100%_0,26px_100%,4px_100%)]' : 'pl-1'}`}
                >
                    {tab}{active !== tab && <span className="pl-1">/</span>}
                </button>
            ))}
            <div className="ml-auto w-[313px] shrink-0 flex items-center justify-between border-l-4 border-[#c9c8cb] pl-1 pr-4 text-[10px] leading-[10px]">
                <button type="button" aria-label="向左滚动">‹</button>
                <button type="button" aria-label="向右滚动">›</button>
            </div>
        </div>
    );
};

const CommandLine = () => (
    <div className="flex h-[53px] shrink-0 bg-[#c8c7c9] text-[10px] font-['DejaVu_Sans_Mono','Noto_Sans_CJK_SC',monospace]">
        <div className="w-[15px] shrink-0 bg-linear-to-b from-[#77767a] to-[#4c4b4f] flex flex-col items-center pt-[11px] gap-[7px] ml-px">
            <svg viewBox="0 0 7 7" className="w-[7px] h-[7px]" stroke="#fff" strokeWidth="1.500"><path d="M1 1L6 6M6 1L1 6" /></svg>
            <svg viewBox="0 0 9 9" className="w-[9px] h-[9px]" fill="#eee"><path d="M1 0L3 2L4 1.500L4.500 3.500L9 7.500L7.500 9L3.500 4.500L1 4L0 1L1.500 2.500Z" /></svg>
        </div>
        <div className="flex-1 min-w-0 flex flex-col">
            <div className="flex-1 pt-0.5 pl-[3px] text-[#29292c]">
                <p className="h-3 leading-3">命令: _u REGION</p>
                <p className="h-3 leading-3">命令:</p>
                <p className="h-3 leading-3">命令: *取消*</p>
            </div>
            <label className="flex items-center h-[13px] bg-white pl-[3px] gap-[2px]">
                <svg viewBox="0 0 10 9" className="w-[10px] h-[9px] shrink-0" fill="#d8d8dc" stroke="#77777c"><path d="M0 0H10V9H0Z" stroke="none" /><path d="M1.500 2.500L4 4.500L1.500 6.500M5 7.500H9" fill="none" /></svg>
                <span>-</span>
                <input aria-label="命令输入" defaultValue="*" className="flex-1 h-3 outline-none bg-transparent" />
            </label>
        </div>
    </div>
);

const modes = ['snap', 'makeBlock', 'grid', 'ortho', 'polar', 'osnap', 'osnap3', 'otrack', 'ducs', 'dyn', 'plus', 'lwt', 'tpy', 'qp', 'sc'];
const activeModes = ['grid', 'osnap', 'ducs', 'plus', 'lwt'];

const StatusBar = () => (
    <footer className="shrink-0">
        <div className="flex items-center h-[14px] px-[3px] bg-linear-to-b from-[#b1b0b3] to-[#8a898c] border-t border-[#4c4b4e] text-[#1f1f22]">
            <button type="button" className="flex items-center gap-1 whitespace-nowrap">
                比例 1:100
                <svg viewBox="0 0 4 3" className="w-1 h-[3px]"><path d="M0 0H4L2 3Z" /></svg>
            </button>
            <div className="flex ml-[114px]">
                {modes.map(mode => (
                    <button key={mode} type="button" aria-label={mode} className={`w-3 h-[13px] flex items-center justify-center border-r border-[#99989b] ${activeModes.includes(mode) ? 'bg-[#b5d9e8]' : 'bg-[#b5b4b7]'}`}>
                        <Glyph name={mode} className="w-[10px] h-[10px]" />
                    </button>
                ))}
            </div>
            <div className="ml-auto flex items-center gap-[3px] whitespace-nowrap">
                <button type="button" className="bg-[#b9b8bb]">模型</button>
                <Glyph name="layoutA" className="w-[10px] h-[10px]" />
                <Glyph name="layoutB" className="w-[10px] h-[10px]" />
                <span className="w-[5px]" />
                <Glyph name="anno" className="w-[9px] h-[10px]" />
                <button type="button" className="flex items-center gap-0.5">1:1 <svg viewBox="0 0 4 3" className="w-1 h-[3px]"><path d="M0 0H4L2 3Z" /></svg></button>
                <Glyph name="annoY" className="w-[9px] h-[10px]" />
                <Glyph name="anno" className="w-[9px] h-[10px]" />
                <Glyph name="gear" className="w-[10px] h-[10px]" />
                <Glyph name="lock" className="w-[10px] h-[10px]" />
                <Glyph name="ball" className="w-[9px] h-[9px]" />
                <button type="button" className="bg-[#bfe3ee] text-[#14566b]">编组</button>
                <button type="button">基线</button>
                <button type="button">填充</button>
                <button type="button">加粗</button>
                <button type="button" className="mr-1">动态标注</button>
                <span className="flex bg-[#cfd3c4] border border-[#8a898c]">
                    <Glyph name="match" className="w-[10px] h-[10px]" />
                    <Glyph name="bulb" className="w-[10px] h-[10px]" />
                </span>
                <Glyph name="down" className="w-[9px] h-2" />
                <svg viewBox="0 0 8 8" className="w-2 h-2 mr-2" fill="#fff" stroke="#333"><path d="M.5 .5H7.500V7.500H.5ZM1 2H7" /></svg>
            </div>
        </div>
        <div className="h-1 bg-[#f6f5f7] overflow-hidden pl-[678px] whitespace-nowrap leading-[10px] text-[9px] text-[#333]">
            回　建议，请到<a href="#forum" className="text-[#2a5db0]">百度经验管理吧</a>反馈
        </div>
    </footer>
);

const Brand = () => (
    <div className="absolute right-[50px] bottom-[19px] w-[188px] h-24 flex items-center bg-[#222f57] text-[#d9dadc]">
        <svg viewBox="355 75 130 173" className="w-[43px] h-[58px] ml-[6px] mb-1 shrink-0" fill="currentColor">
            <path d="M362 96Q372 98 380 103L392 97L400 110L411 119L404 124L392 123Q386 138 393 150Q404 162 430 165L455 171Q470 176 468 187L466 205Q472 220 471 245H461L462 228Q460 215 450 205L454 226L453 242H446L447 226L438 205Q415 206 401 199Q391 208 390 224L386 245H374L380 224Q381 208 375 196Q360 182 357 160Q356 145 370 131Q378 122 374 113Q366 106 362 96Z" />
            <path d="M388 103Q386 90 398 91Q412 94 424 103Q440 108 458 101Q474 96 482 84M394 92Q390 88 391 82M406 94Q399 88 401 80M416 98Q408 88 410 78M428 104Q420 94 424 82M440 105L436 97M452 103Q440 98 436 92M466 98L474 86" fill="none" stroke="currentColor" strokeWidth="4" />
        </svg>
        <div className="ml-[9px] whitespace-nowrap">
            <p className="flex items-center h-[31px] gap-px">
                <span className="text-[34px] leading-[31px] font-['Roboto',sans-serif]">3D</span>
                <span className="text-[27px] leading-[31px] font-bold">溜溜网</span>
            </p>
            <p className="text-[24px] leading-6 mt-0.5 font-light font-['Inter',sans-serif]">3D66.COM</p>
        </div>
    </div>
);

const App = () => (
    <div className="relative flex h-screen overflow-hidden bg-[#d8d7d9] pl-0.5 text-[8px] leading-[10px] font-['Noto_Sans','Noto_Sans_CJK_SC',sans-serif]">
        <div className="flex-1 min-w-0 flex flex-col">
            <Header />
            <Toolbars />
            <div className="flex flex-1 min-h-0 bg-[#626164]">
                <Screen />
                <div className="flex-1 min-w-0 flex flex-col">
                    <div className="flex flex-1 min-h-0 pt-px">
                        <div className="w-[18px] shrink-0 pl-0.5 pt-1 flex flex-col gap-[5px]">
                            <Strip vertical label="绘图" items="line ray polyline polygon rect arc circle cloud spline ellipse ellipseArc insert makeBlock point hatch gradient region grid letterA dots" />
                            <Strip vertical label="图层工具" items="brushO brushR sunPair | lockS | ball sunDoc" />
                        </div>
                        <div className="flex-1 min-w-0 flex flex-col">
                            <div className="flex flex-1 min-h-0">
                                <Drawing />
                                <div className="w-[13px] shrink-0 flex flex-col items-center bg-[#f0eff2] py-1">
                                    <svg viewBox="0 0 7 5" className="w-[7px] h-[5px]" fill="none" stroke="#333"><path d="M1 4L3.500 1L6 4" /></svg>
                                    <div className="mt-auto mb-[38px] w-[10px] h-3 bg-[#c5c4c7]" />
                                    <svg viewBox="0 0 7 5" className="w-[7px] h-[5px]" fill="none" stroke="#333"><path d="M1 1L3.500 4L6 1" /></svg>
                                </div>
                            </div>
                            <LayoutTabs />
                            <div className="h-[3px] shrink-0" />
                        </div>
                        <div className="w-4 shrink-0 pl-0.5 pt-1 flex flex-col gap-[5px]">
                            <Strip vertical label="修改" items="erase copyObj mirror offset array move rotate scale stretch trim extend breakPt breakTwo join chamfer fillet blend explode" />
                            <Strip vertical label="绘图次序" items="orderA orderB orderB orderB | bring orderA" />
                        </div>
                    </div>
                    <CommandLine />
                </div>
            </div>
            <StatusBar />
        </div>
        <div className="w-[6px] shrink-0 bg-[#111] border-l-2 border-[#aaa9ac]" />
        <button type="button" aria-label="命令设置" className="absolute right-[30px] bottom-[39px] w-6 h-5 flex items-center justify-center bg-[#f4fafc] border border-[#70a9c4]">
            <svg viewBox="0 0 12 12" className="w-3 h-3" fill="none" stroke="#25809f" strokeWidth="1.300">
                <path d="M3 6a3 3 0 1 0 6 0a3 3 0 1 0 -6 0M6 0V3M6 9V12M0 6H3M9 6H12M1.800 1.800L4 4M8 8L10.200 10.200M10.200 1.800L8 4M1.800 10.200L4 8" />
            </svg>
        </button>
        <Brand />
        <div className="absolute left-[128px] -bottom-[20px] w-7 h-7 rounded-full bg-[#39a34a] border border-[#bfe6c4] text-center text-white leading-[14px]">60</div>
    </div>
);

export default App;
